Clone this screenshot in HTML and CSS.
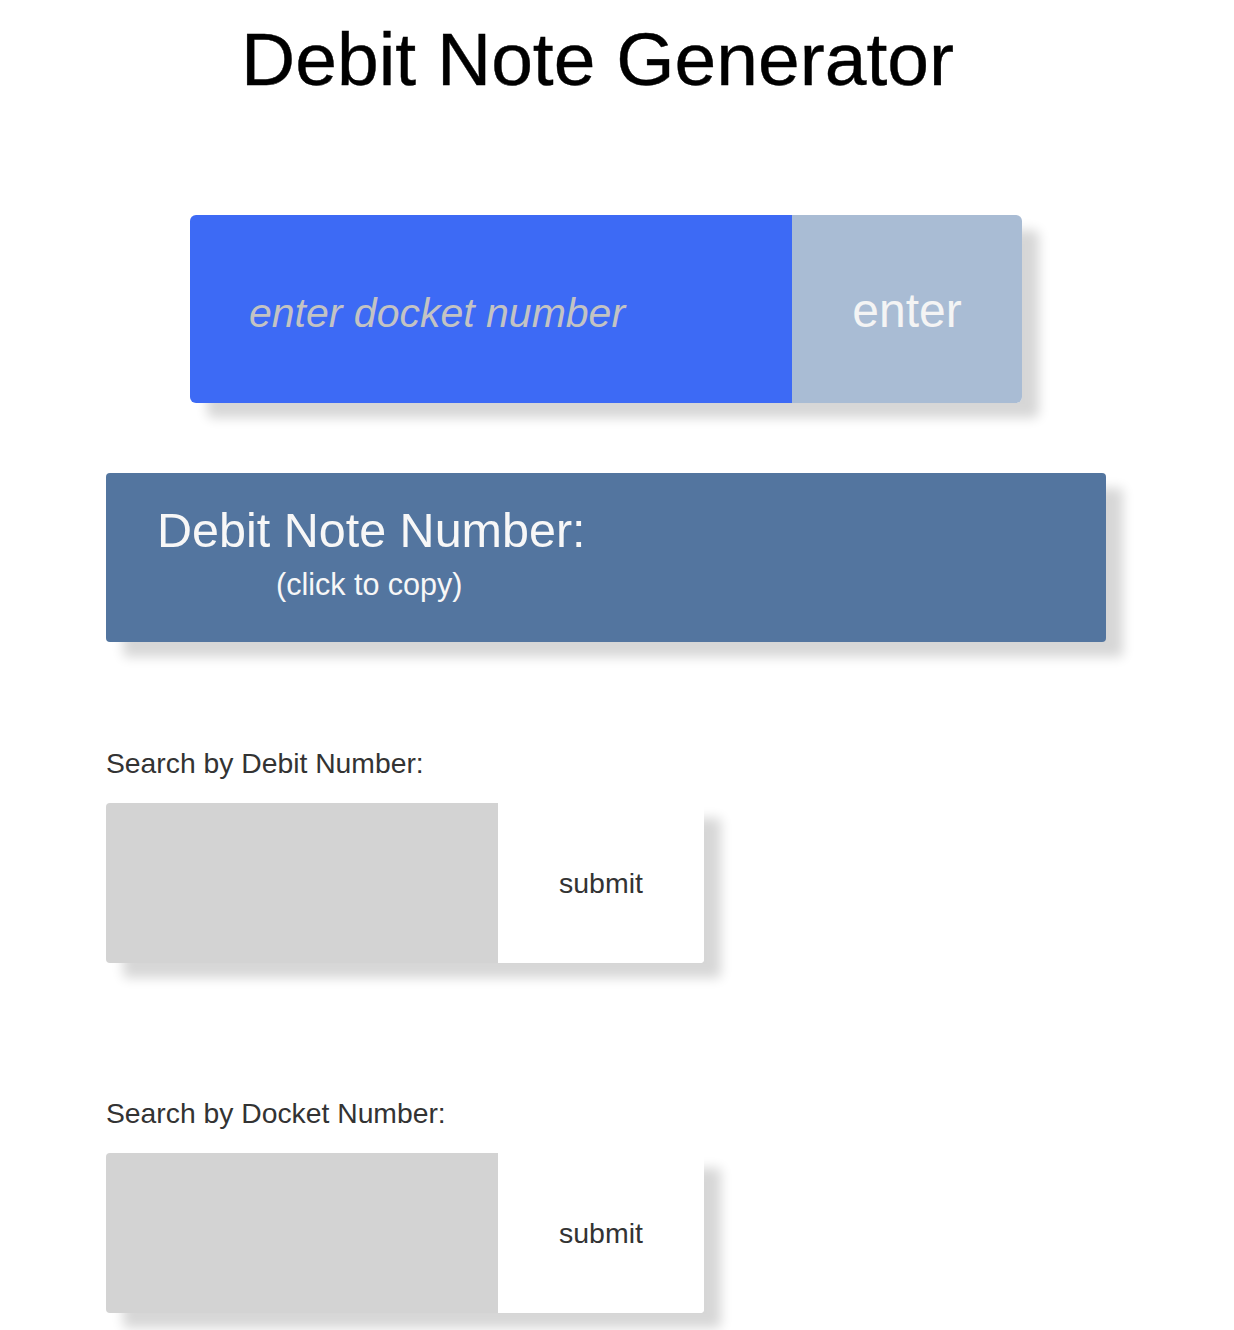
FILE: index.html
```html
<!DOCTYPE html>
<html>
<head>
<meta charset="utf-8">
<title>Debit Note Generator</title>
<link rel="stylesheet" href="styles.css">
</head>
<body>
<main class="page">
  <h1 class="title">Debit Note Generator</h1>

  <form class="docket-form">
    <input class="docket-input" type="text" placeholder="enter docket number">
    <button class="docket-btn" type="button">enter</button>
  </form>

  <section class="result">
    <div class="result-title">Debit Note Number:</div>
    <div class="result-hint">(click to copy)</div>
  </section>

  <div class="search search-first">
    <label class="search-label">Search by Debit Number:</label>
    <form class="search-form">
      <input class="search-input" type="text">
      <button class="search-btn" type="button">submit</button>
    </form>
  </div>

  <div class="search search-second">
    <label class="search-label">Search by Docket Number:</label>
    <form class="search-form">
      <input class="search-input" type="text">
      <button class="search-btn" type="button">submit</button>
    </form>
  </div>
</main>
</body>
</html>
```

FILE: styles.css
```css
* { box-sizing: border-box; }

html, body {
  margin: 0;
  padding: 0;
  background: #ffffff;
}

body {
  font-family: "Liberation Sans", Arial, Helvetica, sans-serif;
  color: #333333;
}

.page {
  width: 1000px;
  margin-left: 106px;
  display: flex;
  flex-direction: column;
  padding-bottom: 17px;
}

.title {
  margin: 16px 0 0;
  padding-right: 17px;
  text-align: center;
  font-size: 75px;
  font-weight: normal;
  line-height: 86px;
  color: #000000;
  -webkit-text-stroke: 0.4px #000000;
}

.docket-form {
  margin: 113px auto 0;
  width: 832px;
  height: 188px;
  display: flex;
  border-radius: 6px;
  overflow: hidden;
  box-shadow: 17px 15px 12px rgba(0, 0, 0, 0.16);
}

.docket-input {
  width: 602px;
  height: 100%;
  border: none;
  outline: none;
  margin: 0;
  padding: 8px 0 0 59px;
  background: #3d6af5;
  font-family: "Liberation Sans", Arial, Helvetica, sans-serif;
  font-size: 41px;
  font-style: italic;
  color: #ffffff;
}

.docket-input::placeholder {
  color: #c3c3c3;
  opacity: 1;
}

.docket-btn {
  flex: 1;
  height: 100%;
  border: none;
  margin: 0;
  padding: 3px 0 0;
  background: #a9bcd4;
  font-family: "Liberation Sans", Arial, Helvetica, sans-serif;
  font-size: 48px;
  color: #f4f4f4;
}

.result {
  margin-top: 70px;
  height: 169px;
  background: #53759f;
  border-radius: 4px;
  padding: 29px 0 0 51px;
  color: #f7f7f7;
  box-shadow: 17px 15px 12px rgba(0, 0, 0, 0.16);
}

.result-title {
  font-size: 48.5px;
  line-height: 56px;
}

.result-hint {
  margin: 9px 0 0 119px;
  font-size: 30.5px;
  line-height: 35px;
}

.search {
  display: flex;
  flex-direction: column;
}

.search-first { margin-top: 105px; }
.search-second { margin-top: 134px; }

.search-label {
  font-size: 28.3px;
  line-height: 32px;
  color: #333333;
}

.search-form {
  margin-top: 24px;
  width: 598px;
  height: 160px;
  display: flex;
  border-radius: 4px;
  overflow: hidden;
  box-shadow: 17px 15px 12px rgba(0, 0, 0, 0.16);
}

.search-input {
  width: 392px;
  height: 100%;
  border: none;
  outline: none;
  margin: 0;
  padding: 0;
  background: #d3d3d3;
}

.search-btn {
  flex: 1;
  height: 100%;
  border: none;
  margin: 0;
  padding: 0;
  background: #ffffff;
  font-family: "Liberation Sans", Arial, Helvetica, sans-serif;
  font-size: 28.5px;
  color: #333333;
}
```
